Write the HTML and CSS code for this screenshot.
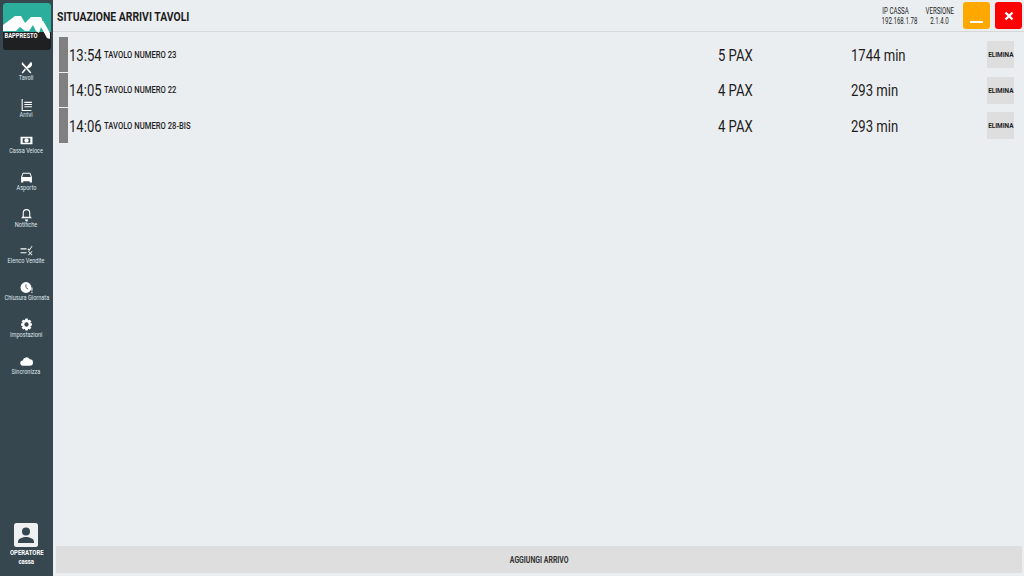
FILE: index.html
```html
<!DOCTYPE html>
<html lang="en">
<head>
    <meta charset="UTF-8">
    <meta name="viewport" content="width=device-width, initial-scale=1.0">
    <link rel="stylesheet" href="styles.css">
    <title>Situazione arrivi tavoli</title>
</head>
<body>
    <aside class="sidebar">
        <div class="logo">
            <svg viewBox="0 0 48 47" width="48" height="47">
                <rect width="48" height="47" rx="3" fill="#1e2022"/>
                <path d="M0 3a3 3 0 0 1 3-3h42a3 3 0 0 1 3 3v26H0z" fill="#2cae9c"/>
                <path d="M0 22L12 13L18 13L22 20L28 14L38 14L47 30V36L44 35L38 24L36 30L33 28L30 22L26 28L22 28L17 24L13 28H0Z" fill="#fff"/>
                <circle cx="40" cy="17" r="1" fill="#2cae9c"/>
                <text x="1.500" y="34.500" class="logo-text" textLength="33" lengthAdjust="spacingAndGlyphs">BAPPRESTO</text>
            </svg>
        </div>

        <nav class="menu">
            <a class="menu-item">
                <svg viewBox="0 0 24 24" width="13" height="13"><path d="M4 2l17 19-2 2L8 11 3 6zM20 2l-8 9 2 2c3 1 7-2 8-5 1-3 0-6-2-6zM3 21l6-7 2 2-6 7z" fill="#fff"/></svg>
                <span>Tavoli</span>
            </a>
            <a class="menu-item">
                <svg viewBox="0 0 24 24" width="13" height="13"><path d="M3 2h2v20h16v2H3zM8 7h14v2H8zM8 11h14v2H8zM8 15h14v2H8z" fill="#fff"/></svg>
                <span>Arrivi</span>
            </a>
            <a class="menu-item">
                <svg viewBox="0 0 24 24" width="13" height="13"><path d="M1 5h22v14H1zM5 8v8h14V8z" fill="#fff" fill-rule="evenodd"/><circle cx="12" cy="12" r="4" fill="#fff"/></svg>
                <span>Cassa Veloce</span>
            </a>
            <a class="menu-item">
                <svg viewBox="0 0 24 24" width="13" height="13"><path d="M5 3h14l3 8v10h-4v-2H6v2H2V11zM6 5l-2 6h16l-2-6z" fill="#fff" fill-rule="evenodd"/></svg>
                <span>Asporto</span>
            </a>
            <a class="menu-item">
                <svg viewBox="0 0 24 24" width="13" height="13"><path d="M12 2a7 7 0 0 1 7 7v6l3 4H2l3-4V9a7 7 0 0 1 7-7zm0 2a5 5 0 0 0-5 5v7h10V9a5 5 0 0 0-5-5zM9 21h6a3 3 0 0 1-6 0z" fill="#fff" fill-rule="evenodd"/></svg>
                <span>Notifiche</span>
            </a>
            <a class="menu-item">
                <svg viewBox="0 0 24 24" width="13" height="13"><path d="M1 8h11v2H1zM1 15h11v2H1zM15 8l2 2 5-7 1 1-6 9-3-3zM15 14l1-1 3 3 3-3 1 1-3 3 3 3-1 1-3-3-3 3-1-1 3-3z" fill="#fff"/></svg>
                <span>Elenco Vendite</span>
            </a>
            <a class="menu-item">
                <svg viewBox="0 0 24 24" width="13" height="13"><circle cx="11" cy="12" r="10" fill="#fff"/><path d="M11 6v6l4 3" stroke="#37474f" stroke-width="1.500" fill="none"/><path d="M21 12h2v6h-2zM21 20h2v2h-2z" fill="#fff"/></svg>
                <span>Chiusura Giornata</span>
            </a>
            <a class="menu-item">
                <svg viewBox="0 0 24 24" width="13" height="13"><path d="M10 1h4l1 3 3-1 3 3-2 3 3 1v4l-3 1 2 3-3 3-3-1-1 3h-4l-1-3-3 1-3-3 2-3-3-1v-4l3-1-2-3 3-3 3 1zm2 7a4 4 0 1 0 0 8 4 4 0 0 0 0-8z" fill="#fff" fill-rule="evenodd"/></svg>
                <span>Impostazioni</span>
            </a>
            <a class="menu-item">
                <svg viewBox="0 0 24 24" width="13" height="13"><path d="M6 20a5 5 0 0 1-1-10 7 7 0 0 1 13-2 6 6 0 0 1 0 12z" fill="#fff"/></svg>
                <span>Sincronizza</span>
            </a>
        </nav>

        <div class="operator">
            <svg viewBox="0 0 24 24" width="24" height="24">
                <rect width="24" height="24" rx="2.500" fill="#eef0f2"/>
                <circle cx="12" cy="8.500" r="4" fill="#37474f"/>
                <path d="M4 20v-1.500c0-3 5-4.500 8-4.500s8 1.500 8 4.500V20z" fill="#37474f"/>
            </svg>
            <strong>OPERATORE</strong>
            <small>cassa</small>
        </div>
    </aside>

    <main class="content">
        <header class="topbar">
            <h1>SITUAZIONE ARRIVI TAVOLI</h1>
            <div class="info"><span>IP CASSA</span><span>192.168.1.78</span></div>
            <div class="info"><span>VERSIONE</span><span>2.1.4.0</span></div>
            <button class="win-btn minimize"><span></span></button>
            <button class="win-btn close">
                <svg viewBox="0 0 10 10" width="10" height="10"><path d="M1.500 1.500l7 7M8.500 1.500l-7 7" stroke="#fff" stroke-width="2.400"/></svg>
            </button>
        </header>

        <section class="arrivals">
            <div class="row">
                <div class="marker"></div>
                <div class="time"><span>13:54</span></div>
                <div class="table"><span>TAVOLO NUMERO 23</span></div>
                <div class="pax"><span>5 PAX</span></div>
                <div class="wait"><span>1744 min</span></div>
                <button class="delete"><span>ELIMINA</span></button>
            </div>
            <div class="row">
                <div class="marker"></div>
                <div class="time"><span>14:05</span></div>
                <div class="table"><span>TAVOLO NUMERO 22</span></div>
                <div class="pax"><span>4 PAX</span></div>
                <div class="wait"><span>293 min</span></div>
                <button class="delete"><span>ELIMINA</span></button>
            </div>
            <div class="row">
                <div class="marker"></div>
                <div class="time"><span>14:06</span></div>
                <div class="table"><span>TAVOLO NUMERO 28-BIS</span></div>
                <div class="pax"><span>4 PAX</span></div>
                <div class="wait"><span>293 min</span></div>
                <button class="delete"><span>ELIMINA</span></button>
            </div>
        </section>

        <button class="add"><span>AGGIUNGI ARRIVO</span></button>
    </main>
</body>
</html>
```

FILE: styles.css
```css
* {
    box-sizing: border-box;
}

/* the original font is much narrower than Roboto, so text is squeezed */
span,
strong,
small,
h1 {
    display: inline-block;
    white-space: nowrap;
}

body {
    font-family: 'Roboto', sans-serif;
    display: flex;
    height: 100vh;
    margin: 0;
    background-color: #ebeef1;
    color: #1c1c1c;
    overflow: hidden;
}

.sidebar {
    width: 53px;
    flex-shrink: 0;
    display: flex;
    flex-direction: column;
    align-items: center;
    background-color: #37474f;
    color: #fff;
}

.logo {
    height: 50px;
    padding-top: 3px;
}

.logo svg {
    display: block;
}

.logo-text {
    font-size: 7px;
    font-weight: bold;
    fill: #fff;
}

.menu {
    width: 100%;
    padding-top: 11px;
    display: flex;
    flex-direction: column;
}

.menu-item {
    height: 36.700px;
    display: flex;
    flex-direction: column;
    align-items: center;
    font-size: 7px;
    line-height: 9px;
    color: #dfe6ea;
}

.menu-item span {
    transform: scaleX(0.8);
}

.operator {
    margin-top: auto;
    padding-bottom: 9px;
    display: flex;
    flex-direction: column;
    align-items: center;
    line-height: 9px;
}

.operator strong {
    font-size: 7px;
    margin-top: 2px;
    transform: scaleX(0.85);
}

.operator small {
    font-size: 7px;
    font-weight: bold;
    transform: scaleX(0.85);
}

.content {
    flex: 1;
    display: flex;
    flex-direction: column;
    min-width: 0;
}

.topbar {
    height: 32px;
    display: flex;
    align-items: center;
    padding: 0 2px 0 4px;
    border-bottom: 1px solid #d6d8da;
}

.topbar h1 {
    font-size: 13px;
    font-weight: bold;
    margin: 2px auto 0 0;
    transform: scaleX(0.8);
    transform-origin: left center;
}

.info {
    width: 41px;
    font-size: 9px;
    line-height: 10px;
    text-align: center;
    margin-top: 1px;
    margin-right: 3px;
}

.info span {
    display: block;
    transform: scaleX(0.68);
}

.win-btn {
    width: 27px;
    height: 27px;
    border: none;
    border-radius: 3px;
    padding: 0;
    margin-left: 5px;
    display: flex;
    align-items: center;
    justify-content: center;
}

.minimize {
    background-color: #ffa800;
    margin-left: 0;
}

.minimize span {
    width: 13px;
    height: 2px;
    margin-top: 13px;
    background-color: #fff;
}

.close {
    background-color: #f00;
}

.arrivals {
    flex: 1;
    padding: 5px 10px 0 6px;
}

.row {
    display: flex;
    align-items: center;
    height: 35.500px;
}

.marker {
    width: 9px;
    height: calc(100% - 1px);
    margin-right: 1px;
    align-self: flex-start;
    background-color: #808080;
}

.time {
    width: 35px;
    font-size: 17px;
}

.time span,
.pax span,
.wait span {
    transform: scaleX(0.77);
    transform-origin: left center;
}

.table {
    flex: 1;
    font-size: 9px;
    font-weight: 500;
}

.table span {
    transform: scaleX(0.85);
    transform-origin: left center;
}

.pax {
    width: 133px;
    font-size: 17px;
}

.wait {
    width: 136px;
    font-size: 17px;
}

.delete {
    width: 27px;
    height: 27px;
    padding: 0;
    border: none;
    background-color: #dedede;
    font-family: inherit;
    font-size: 8px;
    font-weight: bold;
    color: #1c1c1c;
}

.delete span {
    margin-left: -5px;
    margin-right: -5px;
    transform: scaleX(0.8);
}

.add {
    height: 27px;
    margin: 0 2px 3px 3px;
    border: none;
    background-color: #dedede;
    font-family: inherit;
    font-size: 9px;
    font-weight: bold;
    color: #333;
}

.add span {
    transform: scaleX(0.77);
}
```
